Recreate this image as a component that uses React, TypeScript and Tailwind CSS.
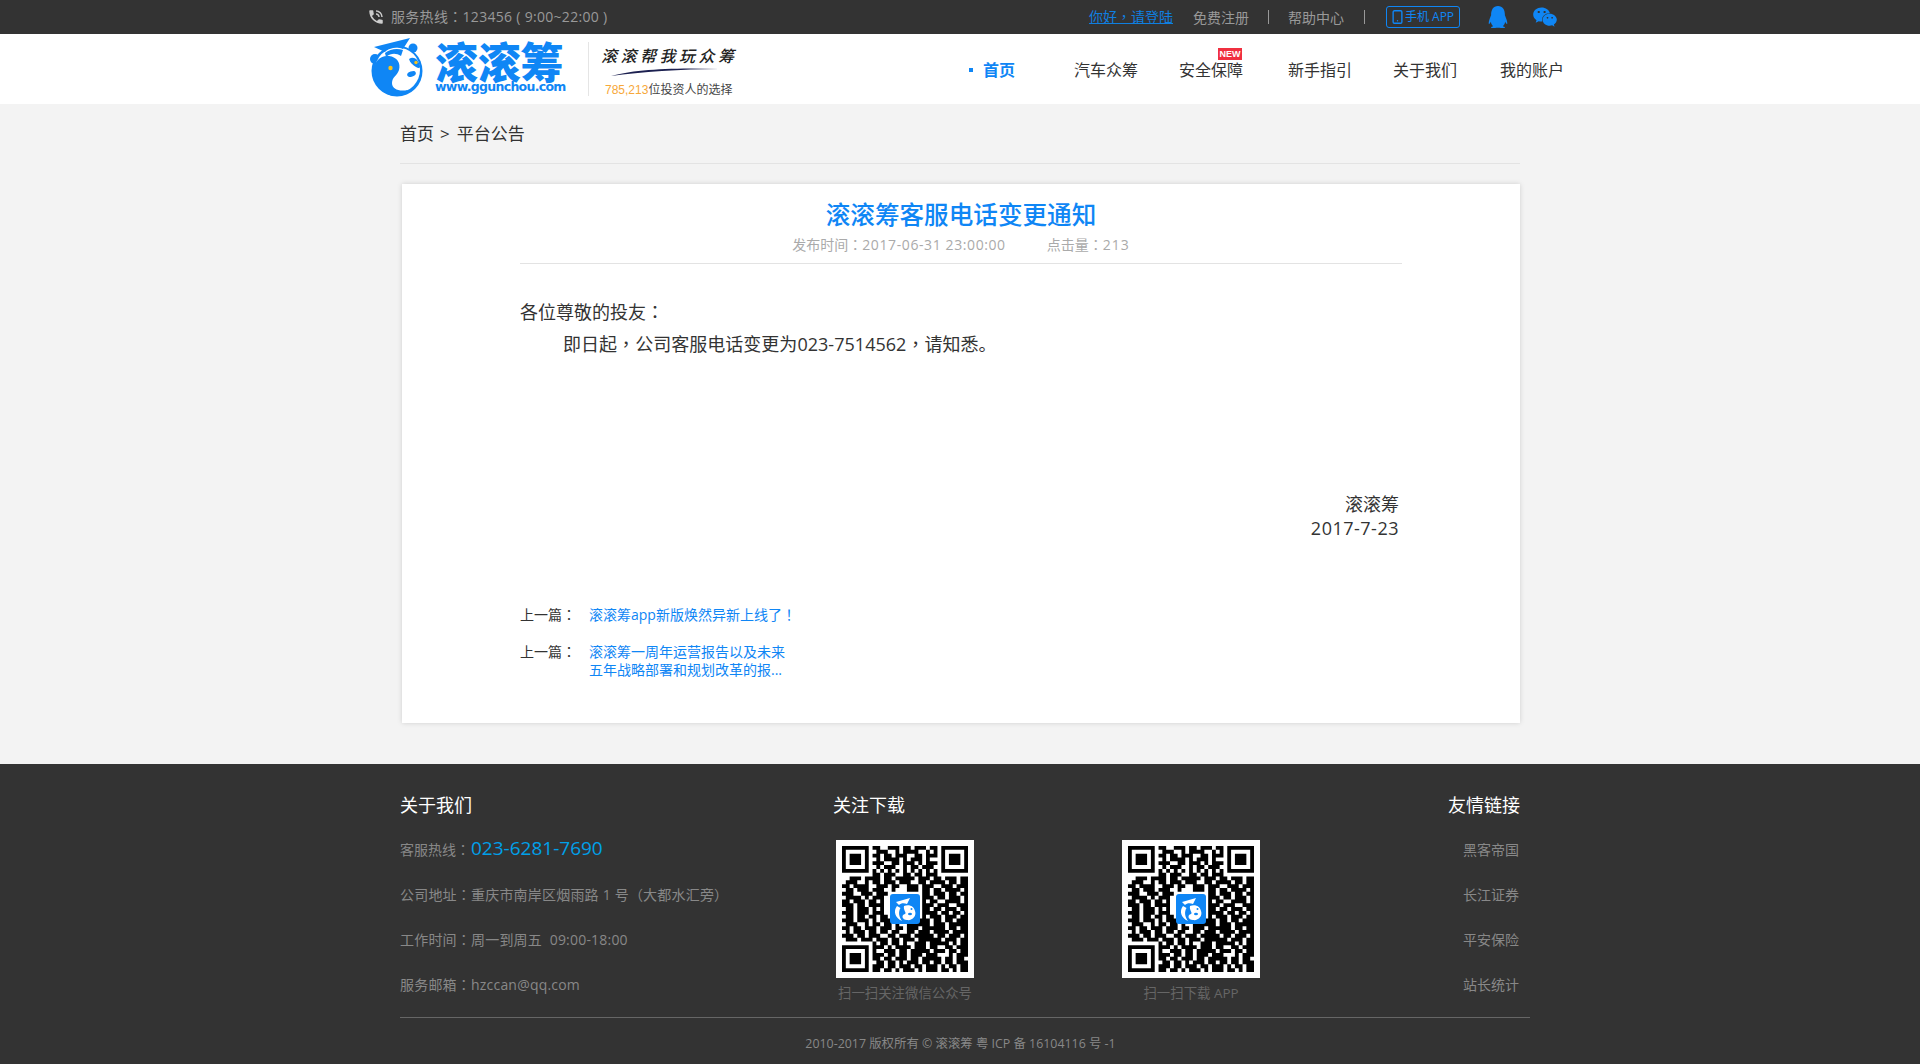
import React from 'react';
import { FaQq, FaWeixin } from 'react-icons/fa';
import { MdPhoneInTalk } from 'react-icons/md';
import { Smartphone } from 'lucide-react';

const finderTop = ['#######', '#.....#', '#.###.#', '#.###.#', '#.###.#', '#.....#', '#######'];
const topMid = [
  '##..###.##.###.##',
  '.###..#.####..#.#',
  '##.##.###..##.###',
  '.#.####.#.###.#..',
  '###..##.###.#.###',
  '.#.###..#.##.###.',
  '#.#.#.#.#.#.#.#.#',
];
const bottomRight = [
  '###.#.####.###.##..##.###',
  '#..###.##.#####.###.##.##',
  '###.##.##.###.###...#.###',
  '##.##.###.##.#####.##.##.',
  '.##.##.#.###.##.##.##.###',
  '###.##.###.##.###.#.##.##',
  '##.##.#.###.#.###.##.#.##',
];

const qrRows = [
  ...topMid.map((mid, i) => `${finderTop[i]}.${mid}.${finderTop[i]}`),
  '........##.###..##.##.###........',
  '..###.####.##.#####.###.##.###.##',
  '.###..#.##.###.###..##.####.##.##',
  '##.####..###.##..###.###..###.###',
  '.##.###.###..#...###.##.##.####.#',
  '###..###.###.........##.###.##.##',
  '.####.#.###..........###.##.###.#',
  '##.###.##.#..........#.##..####.#',
  '###.##.####..........###.###..###',
  '.##.###.#.#..........##.##.###.##',
  '###.###.###..........####.##.##.#',
  '.##.##.##.##.........#.###.###.##',
  '###.###.#.###.......###.##.##.###',
  '.###..#.##.##.#..######.###.#####',
  '##.##.###.###.##.###.######.##.##',
  '.#.###.##.##.##..##.###.####.####',
  '###.##.###..##.###.#####.##.###.#',
  '.###.###.###.##.###.######.###.##',
  '........#.##.##.#..###.#####.#.##',
  ...bottomRight.map((rest, i) => `${finderTop[i]}.${rest}`),
];

const qrPath = qrRows
  .map((row, y) =>
    row
      .split('')
      .map((c, x) => (c === '#' ? `M${x + 1} ${y + 1}h1v1h-1z` : ''))
      .join('')
  )
  .join('');

const T = ({ children }: { children: string }) => (
  <>
    {children.split(/([：，！（）])/).map((part, i) =>
      i % 2 === 1 ? (
        <span key={i} className="leading-[0] font-['Noto_Sans_CJK_TC',sans-serif]">{part}</span>
      ) : (
        <React.Fragment key={i}>{part}</React.Fragment>
      )
    )}
  </>
);

const Panda = ({ className }: { className: string }) => (
  <svg viewBox="0 0 70 70" className={className}>
    <circle cx="9" cy="25" r="5" fill="#0f86f5" />
    <circle cx="47" cy="14" r="4.5" fill="#0f86f5" />
    <circle cx="31" cy="37" r="25.5" fill="#0f86f5" />
    <circle cx="31.5" cy="36" r="22.5" fill="#fff" />
    <path d="M8 36C8 27 15 21 23 22C31 23 35 29 33 36C31 42 26 43 26 49C26 55 33 58 42 56C38 60 34 62 29 62C16 61 7 49 8 36Z" fill="#0f86f5" />
    <path d="M43 25C47 22 52 24 54 32C54 35 52 34 50 33C47 31 44 29 43 25Z" fill="#0f86f5" />
    <ellipse cx="45.5" cy="40" rx="4.5" ry="2.6" transform="rotate(-20 45.5 40)" fill="#0f86f5" />
    <circle cx="24.5" cy="34" r="2.2" fill="#f7c21c" />
    <circle cx="50" cy="28.5" r="1.7" fill="#f7c21c" />
    <path d="M8 13L44 4L37 15C30 12 22 13 19 18Z" fill="#0f86f5" />
    <path d="M19 19C24 15 31 14 37 16L35 22C30 19 25 19 20 23Z" fill="#0f86f5" />
  </svg>
);

const Qr = () => (
  <div className="relative w-[138px] h-[138px] bg-white">
    <svg viewBox="-0.57 -0.57 36.14 36.14" className="w-full h-full">
      <path d={qrPath} fill="#000" />
    </svg>
    <svg viewBox="0 0 30 30" className="absolute left-[54px] top-[54px] w-[30px] h-[30px] rounded-[3px] bg-[#0f86f5]">
      <path d="M6 8L20 4L17 10C14 9 11 9 9 11Z" fill="#fff" />
      <path d="M7 12C3 17 5 24 12 27C9 23 8 18 10.5 14Z" fill="#fff" />
      <path d="M14 12C19 10 24 12 25 17C27 22 22 27 17 26C12 26 11 21 15 20C17 19 13 16 14 12Z" fill="#fff" />
      <circle cx="21.5" cy="15" r="1" fill="#0f86f5" />
      <ellipse cx="20" cy="20" rx="2" ry="1.2" fill="#0f86f5" />
    </svg>
  </div>
);

const navItems = [
  { label: '汽车众筹', ml: 'ml-[59px]' },
  { label: '安全保障', ml: 'ml-[41px]', isNew: true },
  { label: '新手指引', ml: 'ml-[45px]' },
  { label: '关于我们', ml: 'ml-[41px]' },
  { label: '我的账户', ml: 'ml-[43px]' },
];

const aboutRows = ['公司地址：重庆市南岸区烟雨路 1 号（大都水汇旁）', '工作时间：周一到周五  09:00-18:00', '服务邮箱：hzccan@qq.com'];
const friendLinks = ['黑客帝国', '长江证券', '平安保险', '站长统计'];

export default function App() {
  return (
    <div className="min-h-[1064px] bg-[#f3f3f3] font-['Open_Sans','Noto_Sans_CJK_SC',sans-serif] text-[#333]">
      {/* top bar */}
      <div className="h-[34px] bg-[#333]">
        <div className="ml-[367px] w-[1197px] h-full flex items-center text-[14px] text-[#999]">
          <MdPhoneInTalk className="w-[18px] h-[18px] text-[#ccc]" />
          <span className="ml-[6px] mb-[1px] tracking-[0.3px] whitespace-pre"><T>服务热线：123456 ( 9:00~22:00 )</T></span>
          <a className="ml-auto mb-[1px] text-[#0f7fe0] underline"><T>你好，请登陆</T></a>
          <span className="ml-[20px]">免费注册</span>
          <span className="ml-[19px] w-px h-[14px] bg-[#999]" />
          <span className="ml-[19px]">帮助中心</span>
          <span className="ml-[20px] w-px h-[14px] bg-[#999]" />
          <span className="ml-[21px] w-[74px] h-[22px] border border-[#0f86f5] rounded-[3px] flex items-center justify-center text-[12px] text-[#0f86f5]">
            <Smartphone className="w-[15px] h-[18px] -ml-[2px]" strokeWidth={2.2} />
            手机 APP
          </span>
          <FaQq className="ml-[28px] w-[20px] h-[22px] text-[#0f86f5]" />
          <FaWeixin className="ml-[24px] mr-[6px] w-[26px] h-[22px] text-[#0f86f5]" />
        </div>
      </div>

      {/* header */}
      <div className="h-[70px] bg-white">
        <div className="ml-[367px] w-[1197px] h-full flex items-center">
          <Panda className="w-[70px] h-[70px] -ml-[1px]" />
          <div className="self-start mt-[10px] w-[131px] -ml-[1px]">
            <div className="text-[43px] leading-[38px] font-black text-[#0f86f5] whitespace-nowrap tracking-[-0.3px]">滚滚筹</div>
            <div className="text-[12.5px] leading-[10px] font-bold text-[#0f86f5] font-['DejaVu_Sans',sans-serif] tracking-[-0.7px] whitespace-nowrap">www.ggunchou.com</div>
          </div>
          <div className="ml-[22px] w-px h-[54px] bg-[#e5e5e5]" />
          <div className="ml-[12px] w-[140px] pt-[5px]">
            <div className="text-[16px] leading-[22px] font-medium italic text-[#222] tracking-[3.5px] whitespace-nowrap">滚滚帮我玩众筹</div>
            <svg viewBox="0 0 110 10" className="w-[110px] h-[10px] ml-[10px]">
              <path d="M0 9C20 3 60 0 108 2C70 2 30 5 0 9Z" fill="#1c2050" />
            </svg>
            <div className="mt-[5px] text-[12px] leading-[16px] text-[#444] whitespace-nowrap ml-[4px]">
              <span className="text-[#f7a839] font-['Liberation_Sans',sans-serif]">785,213</span>位投资人的选择
            </div>
          </div>

          <span className="ml-auto mt-[2px] w-[4px] h-[4px] bg-[#0f86f5]" />
          <a className="ml-[10px] mt-[2px] text-[16px] font-bold text-[#0f86f5]">首页</a>
          {navItems.map((item) => (
            <a key={item.label} className={`${item.ml} relative mt-[2px] text-[16px] text-[#333]`}>
              {item.label}
              {item.isNew && (
                <span className="absolute right-[1px] -top-[10px] w-[24px] h-[12px] bg-[#f03040] text-white text-[9px] leading-[12px] font-bold text-center font-['Liberation_Sans',sans-serif]">
                  NEW
                </span>
              )}
            </a>
          ))}
        </div>
      </div>

      {/* breadcrumb */}
      <div className="ml-[400px] w-[1120px] h-[60px] border-b border-[#e3e3e3] flex items-center text-[17px]">
        首页<span className="ml-[6px] mr-[7px]">&gt;</span>平台公告
      </div>

      {/* article card */}
      <div className="ml-[402px] mt-[20px] w-[1118px] h-[539px] bg-white shadow-[0_0_5px_rgba(0,0,0,0.15)] px-[118px]">
        <div className="pt-[13px] border-b border-[#e3e3e3] pb-[8px] text-center">
          <h1 className="text-[24.6px] leading-[36px] font-medium text-[#0f86f5]">滚滚筹客服电话变更通知</h1>
          <div className="mt-[2px] text-[14px] leading-[20px] text-[#aaa]">
            <T>发布时间：</T><span className="tracking-[0.6px]">2017-06-31 23:00:00</span>
            <span className="ml-[41px]"><T>点击量：</T><span className="tracking-[1px]">213</span></span>
          </div>
        </div>
        <div className="mt-[32px] text-[18px] leading-[32px] text-[#333]">
          <p><T>各位尊敬的投友：</T></p>
          <p className="pl-[43px] tracking-[0.03px]"><T>即日起，公司客服电话变更为023-7514562，请知悉。</T></p>
        </div>
        <div className="mt-[132px] text-right text-[18px] leading-[24px] pr-[3px]">
          <p>滚滚筹</p>
          <p className="tracking-[0.5px]">2017-7-23</p>
        </div>
        <div className="mt-[66px] flex text-[14px] leading-[18px]">
          <span className="w-[69px]"><T>上一篇：</T></span>
          <a className="text-[#0f86f5]"><T>滚滚筹app新版焕然异新上线了！</T></a>
        </div>
        <div className="mt-[19px] flex text-[14px] leading-[18px]">
          <span className="w-[69px]"><T>上一篇：</T></span>
          <a className="w-[200px] text-[#0f86f5]">滚滚筹一周年运营报告以及未来五年战略部署和规划改革的报...</a>
        </div>
      </div>

      {/* footer */}
      <div className="mt-[41px] h-[300px] overflow-hidden bg-[#333] text-[14px] text-[#888]">
        <div className="ml-[400px] w-[1130px]">
          <div className="pt-[28px] flex border-b border-[#666] h-[254px]">
            <div className="w-[433px]">
              <h3 className="text-[18px] leading-[26px] text-white">关于我们</h3>
              <div className="mt-[9px] h-[45px] flex items-center">
                <span><T>客服热线：</T></span><span className="text-[19px] text-[#00a0e9] ml-[1px] -mt-[2px]">023-6281-7690</span>
              </div>
              {aboutRows.map((row) => (
                <div key={row} className="h-[45px] flex items-center">
                  <span className="whitespace-pre tracking-[0.2px]"><T>{row}</T></span>
                </div>
              ))}
            </div>
            <div className="w-[430px]">
              <h3 className="text-[18px] leading-[26px] text-white">关注下载</h3>
              <div className="mt-[22px] ml-[3px] flex gap-[148px]">
                <div className="w-[138px] text-center">
                  <Qr />
                  <div className="mt-[5px] leading-[20px] text-[13.4px] text-[#666] whitespace-nowrap">扫一扫关注微信公众号</div>
                </div>
                <div className="w-[138px] text-center">
                  <Qr />
                  <div className="mt-[5px] leading-[20px] text-[13.4px] text-[#666] whitespace-nowrap">扫一扫下载 APP</div>
                </div>
              </div>
            </div>
            <div className="flex-1 pr-[10px] text-right">
              <h3 className="text-[18px] leading-[26px] text-white">友情链接</h3>
              <div className="mt-[9px] pr-[1px]">
                {friendLinks.map((link) => (
                  <div key={link} className="h-[45px] flex items-center justify-end">{link}</div>
                ))}
              </div>
            </div>
          </div>
          <div className="pt-[17px] leading-[18px] text-[12.4px] text-center -ml-[9px]">
            2010-2017 版权所有 © 滚滚筹 粤 ICP 备 16104116 号 -1
          </div>
        </div>
      </div>
    </div>
  );
}
